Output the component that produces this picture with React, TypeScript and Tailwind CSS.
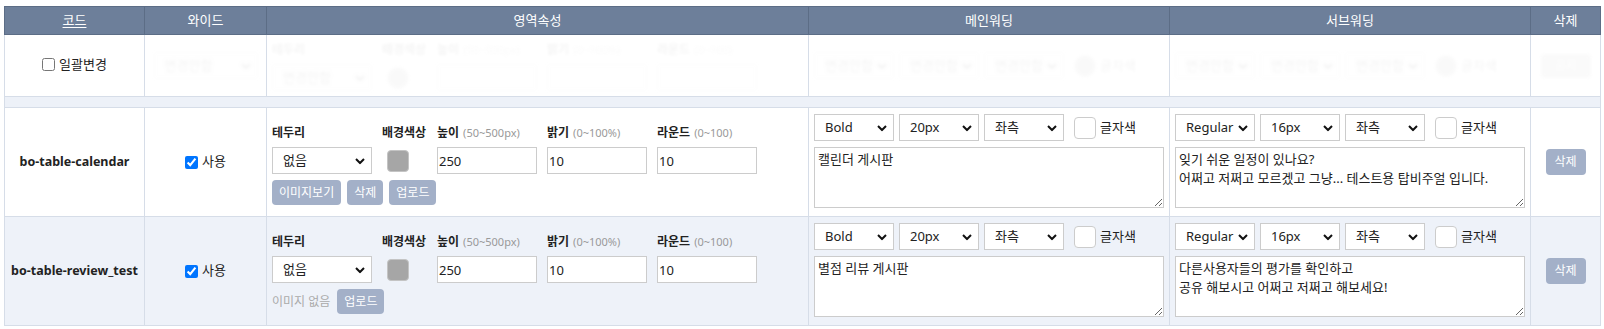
import type { ReactNode } from "react";

const font = "font-['Noto_Sans','Noto_Sans_CJK_KR',sans-serif]";

function Select({ value, className = "" }: { value: string; className?: string }) {
  return (
    <div className={`relative h-[27px] ${className}`}>
      <select
        defaultValue={value}
        className="h-full w-full appearance-none border border-[#cccccc] bg-white pl-[10px] text-[13px] text-[#222]"
      >
        <option>{value}</option>
      </select>
      <svg
        className="pointer-events-none absolute right-[7px] top-1/2 -translate-y-1/2"
        width="10"
        height="7"
        viewBox="0 0 10 7"
      >
        <path d="M1 1.5 L5 5.5 L9 1.5" fill="none" stroke="#111" strokeWidth="2" />
      </svg>
    </div>
  );
}

function Label({ children, hint }: { children: ReactNode; hint?: string }) {
  return (
    <div className="mb-[5px] h-[18px] whitespace-nowrap text-[12px] leading-[18px] font-bold text-[#222]">
      {children}
      {hint && <span className="ml-[4px] text-[11px] font-normal text-[#999]">{hint}</span>}
    </div>
  );
}

function NumInput({ value }: { value: string }) {
  return (
    <input
      defaultValue={value}
      className="h-[27px] w-[100px] border border-[#cccccc] bg-white px-[1px] text-[13px] text-[#222]"
    />
  );
}

function SmallBtn({ children, className = "" }: { children: ReactNode; className?: string }) {
  return (
    <button className={`rounded-[4px] bg-[#a3b0c8] px-[7px] text-[12px] text-white ${className}`}>
      {children}
    </button>
  );
}

function AreaFields({ placeholder, noImage, faded }: { placeholder?: boolean; noImage?: boolean; faded?: boolean }) {
  const v = (s: string) => (placeholder ? "" : s);
  return (
    <div className="flex flex-col gap-[6px]">
      <div className="flex gap-[10px]">
        <div className="w-[100px]">
          <Label>테두리</Label>
          <Select value={placeholder ? "변경안함" : "없음"} className="w-[100px]" />
        </div>
        <div className="w-[45px]">
          <Label>배경색상</Label>
          <div className="flex h-[27px] items-center">
            <div
              className={`ml-[5px] h-[22px] w-[22px] border border-[#c4c4c4] ${
                faded ? "rounded-full bg-[#888]" : "rounded-[4px] bg-[#a6a6a6]"
              }`}
            />
          </div>
        </div>
        <div className="w-[100px]">
          <Label hint="(50~500px)">높이</Label>
          <NumInput value={v("250")} />
        </div>
        <div className="w-[100px]">
          <Label hint="(0~100%)">밝기</Label>
          <NumInput value={v("10")} />
        </div>
        <div className="w-[100px]">
          <Label hint="(0~100)">라운드</Label>
          <NumInput value={v("10")} />
        </div>
      </div>
      {!placeholder &&
        (noImage ? (
          <div className="flex h-[25px] items-center gap-[7px]">
            <span className="text-[12px] text-[#aaa]">이미지 없음</span>
            <SmallBtn className="h-[25px]">업로드</SmallBtn>
          </div>
        ) : (
          <div className="flex h-[25px] gap-[6px]">
            <SmallBtn>이미지보기</SmallBtn>
            <SmallBtn>삭제</SmallBtn>
            <SmallBtn>업로드</SmallBtn>
          </div>
        ))}
    </div>
  );
}

function WordingControls({ weight, size, faded }: { weight: string; size: string; faded?: boolean }) {
  return (
    <div className="flex items-center">
      <div className="flex gap-[5px]">
        <Select value={weight} className="w-[80px]" />
        <Select value={size} className="w-[80px]" />
        <Select value={faded ? "변경안함" : "좌측"} className="w-[80px]" />
      </div>
      <div
        className={`ml-[10px] h-[22px] w-[22px] border border-[#cccccc] ${
          faded ? "rounded-full bg-[#888]" : "rounded-[4px] bg-white"
        }`}
      />
      <span className="ml-[4px] text-[13px] text-[#222]">글자색</span>
    </div>
  );
}

function Wording({ weight, size, text }: { weight: string; size: string; text: string }) {
  return (
    <div className="flex flex-col gap-[6px]">
      <WordingControls weight={weight} size={size} />
      <textarea
        defaultValue={text}
        className="h-[61px] w-full border border-[#cccccc] bg-white px-[3px] py-[2px] text-[13px] leading-[19px] text-[#222]"
      />
    </div>
  );
}

const rows = [
  {
    code: "bo-table-calendar",
    main: "캘린더 게시판",
    sub: "잊기 쉬운 일정이 있나요?\n어쩌고 저쩌고 모르겠고 그냥... 테스트용 탑비주얼 입니다.",
    noImage: false,
    bg: "bg-white",
  },
  {
    code: "bo-table-review_test",
    main: "별점 리뷰 게시판",
    sub: "다른사용자들의 평가를 확인하고\n공유 해보시고 어쩌고 저쩌고 해보세요!",
    noImage: true,
    bg: "bg-[#eef2f9]",
  },
];

const td = "border border-[#d6dde8]";
const th = "border border-[#5c6d86] bg-[#6d7f9a] h-[28px] text-[13px] font-normal text-white";
const fade = "pointer-events-none opacity-[0.045] blur-[1.5px]";

export default function App() {
  return (
    <div className={`min-h-screen bg-white px-1 pt-[6px] ${font}`}>
      <table className="w-[1596px] table-fixed border-collapse text-[13px] text-[#222]">
        <colgroup>
          <col className="w-[140px]" />
          <col className="w-[122px]" />
          <col className="w-[542px]" />
          <col className="w-[361px]" />
          <col className="w-[361px]" />
          <col className="w-[70px]" />
        </colgroup>
        <thead>
          <tr>
            <th className={th}>
              <span className="underline underline-offset-2">코드</span>
            </th>
            <th className={th}>와이드</th>
            <th className={th}>영역속성</th>
            <th className={th}>메인워딩</th>
            <th className={th}>서브워딩</th>
            <th className={th}>삭제</th>
          </tr>
        </thead>
        <tbody>
          {/* 일괄변경 */}
          <tr className="h-[62px] bg-white">
            <td className={`${td} text-center`}>
              <label className="inline-flex items-center gap-[4px]">
                <input type="checkbox" className="h-[13px] w-[13px]" />
                <span>일괄변경</span>
              </label>
            </td>
            <td className={td}>
              <div className={`${fade} flex justify-center`}>
                <Select value="변경안함" className="w-[104px]" />
              </div>
            </td>
            <td className={`${td} px-[5px] align-top pt-[6px]`}>
              <div className={fade}>
                <AreaFields placeholder faded />
              </div>
            </td>
            <td className={`${td} px-[5px]`}>
              <div className={fade}>
                <WordingControls weight="변경안함" size="변경안함" faded />
              </div>
            </td>
            <td className={`${td} px-[5px]`}>
              <div className={fade}>
                <WordingControls weight="변경안함" size="변경안함" faded />
              </div>
            </td>
            <td className={`${td} text-center`}>
              <div className={fade}>
                <button className="h-[24px] w-[50px] rounded-[4px] bg-[#999] text-[12px] text-white">
                  공지
                </button>
              </div>
            </td>
          </tr>
          <tr>
            <td colSpan={6} className={`${td} h-[11px] bg-[#edf1f8]`} />
          </tr>
          {rows.map((r) => (
            <tr key={r.code} className={r.bg}>
              <td className={`${td} text-center text-[12.5px] font-bold`}>{r.code}</td>
              <td className={`${td}`}>
                <label className="flex items-center justify-center gap-[4px]">
                  <input type="checkbox" defaultChecked className="h-[13px] w-[13px]" />
                  <span>사용</span>
                </label>
              </td>
              <td className={`${td} px-[5px] pt-[16px] align-top`}>
                <AreaFields noImage={r.noImage} />
              </td>
              <td className={`${td} px-[5px] pt-[6px] pb-[8px]`}>
                <Wording weight="Bold" size="20px" text={r.main} />
              </td>
              <td className={`${td} px-[5px] pt-[6px] pb-[8px]`}>
                <Wording weight="Regular" size="16px" text={r.sub} />
              </td>
              <td className={`${td} text-center`}>
                <button className="h-[26px] w-[40px] rounded-[4px] bg-[#a3b0c8] text-[12px] text-white">
                  삭제
                </button>
              </td>
            </tr>
          ))}
        </tbody>
      </table>
    </div>
  );
}
